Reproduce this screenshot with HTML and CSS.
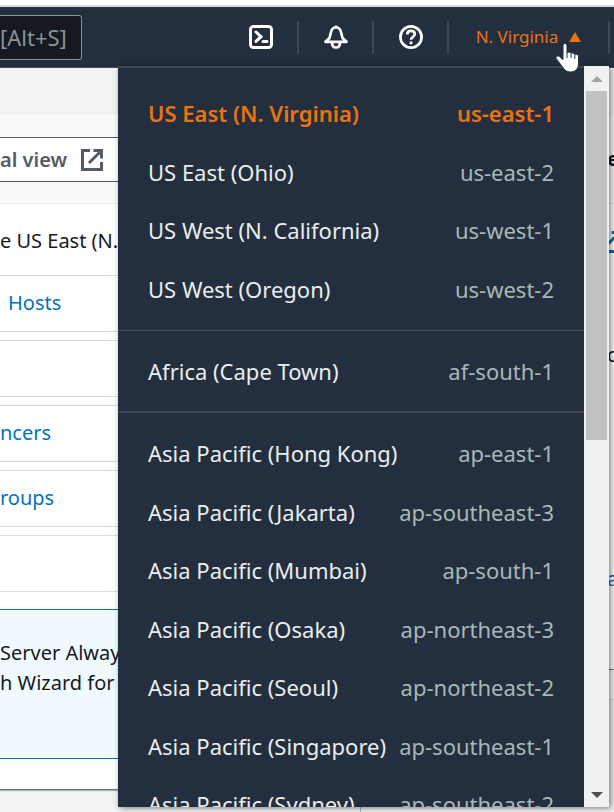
FILE: index.html
```html
<!DOCTYPE html>
<html lang="en">
<head>
<meta charset="utf-8">
<title>Region selector</title>
<link rel="stylesheet" href="styles.css">
</head>
<body>
<header class="topbar">
  <label class="visually-hidden" for="search">Search</label>
  <input class="search" id="search" type="text" value="[Alt+S]">
  <nav class="tools">
    <button class="tool" aria-label="CloudShell">
      <svg viewBox="0 0 24 24" width="24" height="24"><rect x="1.5" y="1.5" width="21" height="21" rx="3"/><path d="M7 7l5 4.700-5 4.700M14 16.500h4" stroke-linecap="round"/></svg>
    </button>
    <button class="tool" aria-label="Notifications">
      <svg viewBox="0 0 24 24" width="24" height="24"><path d="M12 0.500v2M1.500 16.800h21l-4-3.800-1.500-6C16.500 4.500 14.500 2.500 12 2.500S7.500 4.500 7 7l-1.500 6-4 3.800zM8 17.500c0 3 1.600 5 4 5s4-2 4-5" stroke-width="2.700" stroke-linejoin="round"/></svg>
    </button>
    <button class="tool" aria-label="Help">
      <svg viewBox="0 0 24 24" width="24" height="24"><circle cx="12" cy="12" r="10.600" stroke-width="2.700"/><path d="M8.300 9.500C8.300 7 9.800 5.800 12 5.800s3.800 1.200 3.800 3.300c0 2.800-3.800 2.600-3.800 5.700M12 16.500v2.800" stroke-width="2.700"/></svg>
    </button>
    <button class="region-button">N. Virginia <span class="caret"></span></button>
  </nav>
</header>
<div class="page">
  <main class="main">
    <section class="panel">
      <div class="panel-head">
        <button class="view-button">al view
          <svg viewBox="0 0 22 22" width="22" height="22"><path d="M9 1.500H1.500v19h19V13M12.500 1.500h8V9.500M20 2L8 14"/></svg>
        </button>
      </div>
      <p class="intro">e US East (N.</p>
      <div class="cards">
        <div class="card"><a href="#">Hosts</a></div>
        <div class="card"></div>
        <div class="card cut"><a href="#">ncers</a></div>
        <div class="card cut"><a href="#">roups</a></div>
        <div class="card"></div>
      </div>
      <div class="info">Server Alway<br>h Wizard for</div>
    </section>
  </main>
  <aside class="side">
    <section class="side-panel">
      <h2 class="side-head">e</h2>
      <div class="side-body">
        <a class="side-link" href="#" aria-label="Open">
          <svg viewBox="0 0 22 22" width="22" height="22"><path d="M9 1.500H1.500v19h19V13M12.500 1.500h8V9.500M20 2L8 14"/></svg>
        </a>
        <p>c</p>
        <a class="side-more" href="#">a</a>
      </div>
    </section>
    <section class="side-next"></section>
  </aside>
</div>
<div class="menu">
  <div class="regions">
    <ul class="group">
      <li class="current"><a href="#">US East (N. Virginia) <span>us-east-1</span></a></li>
      <li><a href="#">US East (Ohio) <span>us-east-2</span></a></li>
      <li><a href="#">US West (N. California) <span>us-west-1</span></a></li>
      <li><a href="#">US West (Oregon) <span>us-west-2</span></a></li>
    </ul>
    <ul class="group">
      <li><a href="#">Africa (Cape Town) <span>af-south-1</span></a></li>
    </ul>
    <ul class="group">
      <li><a href="#">Asia Pacific (Hong Kong) <span>ap-east-1</span></a></li>
      <li><a href="#">Asia Pacific (Jakarta) <span>ap-southeast-3</span></a></li>
      <li><a href="#">Asia Pacific (Mumbai) <span>ap-south-1</span></a></li>
      <li><a href="#">Asia Pacific (Osaka) <span>ap-northeast-3</span></a></li>
      <li><a href="#">Asia Pacific (Seoul) <span>ap-northeast-2</span></a></li>
      <li><a href="#">Asia Pacific (Singapore) <span>ap-southeast-1</span></a></li>
      <li><a href="#">Asia Pacific (Sydney) <span>ap-southeast-2</span></a></li>
    </ul>
  </div>
  <div class="scrollbar"><i class="up"></i><i class="thumb"></i><i class="down"></i></div>
</div>
<svg class="cursor" viewBox="0 0 26 32" width="26" height="32"><path d="M8 4c0-3.500 4-3.500 4 0v7c1-1.500 3.500-1 4 .5 1-1 3.200-.6 3.800 1 1.200-.8 3.700-.2 3.700 2v7c0 5-3 8.500-8 8.500-4 0-6-2-8-5l-6-8c-1.500-2 1-4 3-2.500L8 17.500z"/><path d="M12 11v5M16 12v4M19.800 13v4"/></svg>
</body>
</html>
```
FILE: styles.css
```css
* { box-sizing: border-box; }
body {
  margin: 0;
  height: 100vh;
  overflow: hidden;
  display: flex;
  flex-direction: column;
  position: relative;
  background: #f2f2f2;
  color: #16191f;
  font: 20px/30px "Noto Sans", sans-serif;
}
a { color: #0073bb; text-decoration: none; }
p, h2, ul { margin: 0; padding: 0; }
ul { list-style: none; }
button { border: 0; background: none; padding: 0; font: inherit; color: inherit; }
svg { display: block; fill: none; stroke: currentColor; stroke-width: 3; }
.visually-hidden { position: absolute; width: 1px; height: 1px; overflow: hidden; clip-path: inset(50%); }

.topbar {
  flex: none;
  display: flex;
  justify-content: space-between;
  align-items: center;
  height: 67px;
  padding-top: 7px;
  background: linear-gradient(#fff 5px, #d5dbdb 5px, #d5dbdb 7px, #232f3e 7px);
  color: #fff;
}
.search {
  width: 82px;
  height: 45px;
  padding: 0;
  border: 1px solid #879596;
  border-left: 0;
  border-radius: 0 3px 3px 0;
  background: #16191f;
  color: #879596;
  font: inherit;
  font-size: 22px;
}
.tools { display: flex; align-items: center; padding-right: 4px; }
.tool, .region-button {
  display: flex;
  align-items: center;
  justify-content: center;
  height: 33px;
  border-right: 2px solid #414750;
}
.tool { width: 75px; }
.region-button { width: 161px; gap: 11px; color: #ec7211; font-size: 17px; }
.caret { border: 6px solid transparent; border-top: 0; border-bottom: 10px solid #ec7211; }

.page { flex: 1; display: flex; border-top: 1px solid #4b5162; min-height: 0; }
.main { flex: 1; padding-top: 47px; min-width: 0; }
.panel { height: 675px; background: #fff; border-bottom: 1px solid #687078; box-shadow: 0 1px 1px #aab7b8; }
.panel-head { padding: 22px 0 21px; background: #fafafa; border-bottom: 1px solid #eaeded; }
.view-button {
  display: flex;
  align-items: center;
  gap: 14px;
  width: 132px;
  height: 45px;
  border: 1px solid #545b64;
  border-left: 0;
  background: #fff;
  color: #545b64;
  font-weight: 600;
}
.intro { padding: 22px 0 19px; }
.cards { display: grid; gap: 8px; margin-bottom: 17px; }
.card { height: 57px; padding: 12px 8px; border: solid #d5dbdb; border-width: 1px 0; }
.card.cut { padding-left: 0; }
.info { height: 150px; padding-top: 28px; background: #f1faff; border: solid #0073bb; border-width: 1px 0; }
.side { flex: none; width: 254px; padding-top: 47px; border-left: 1px solid #aab7b8; overflow: hidden; }
.side-panel { height: 555px; background: #fff; border-bottom: 1px solid #687078; }
.side-head { height: 89px; padding: 29px 0 0 246px; background: #fafafa; border-bottom: 1px solid #eaeded; font-size: 20px; font-weight: 700; }
.side-body { padding: 27px 0 0 246px; }
.side-link { display: block; width: 22px; margin: 0 0 87px -8px; }
.side-more { display: block; margin-top: 194px; }
.side-next { height: 30px; background: #fafafa; border-bottom: 1px solid #d5dbdb; }

.menu {
  position: absolute;
  top: 66px;
  right: 5px;
  bottom: 5px;
  width: 491px;
  display: flex;
  background: #232f3e;
  box-shadow: 2px 1px 6px #00000080;
}
.regions { flex: 1; overflow: hidden; border-top: 2px solid #414750; font-size: 22px; }
.group { padding: 11px 0; }
.group:first-child { padding: 16px 0 12px; }
.group + .group { border-top: 1px solid #414d5c; }
.group + .group:last-child { border-top: 2px solid #414750; }
.group a { display: flex; justify-content: space-between; align-items: center; height: 58px; padding: 0 30px; color: #eaeded; }
.group li:nth-child(even) { padding-top: 1px; }
.group span { color: #aab7b8; }
.group .current a, .group .current span { color: #ec7211; font-weight: 600; }
.scrollbar { width: 25px; padding: 10px 2px 9px; display: flex; flex-direction: column; align-items: center; background: #f1f1f1; }
.up { border: 6px solid transparent; border-top: 0; border-bottom-color: #a3a3a3; margin-bottom: 9px; }
.thumb { align-self: stretch; height: 349px; background: #c1c1c1; }
.down { margin-top: auto; border: 6px solid transparent; border-bottom: 0; border-top-color: #505050; }
.cursor { position: absolute; top: 42px; right: 33px; fill: #fff; stroke: #232f3e; stroke-width: 1; }
```
